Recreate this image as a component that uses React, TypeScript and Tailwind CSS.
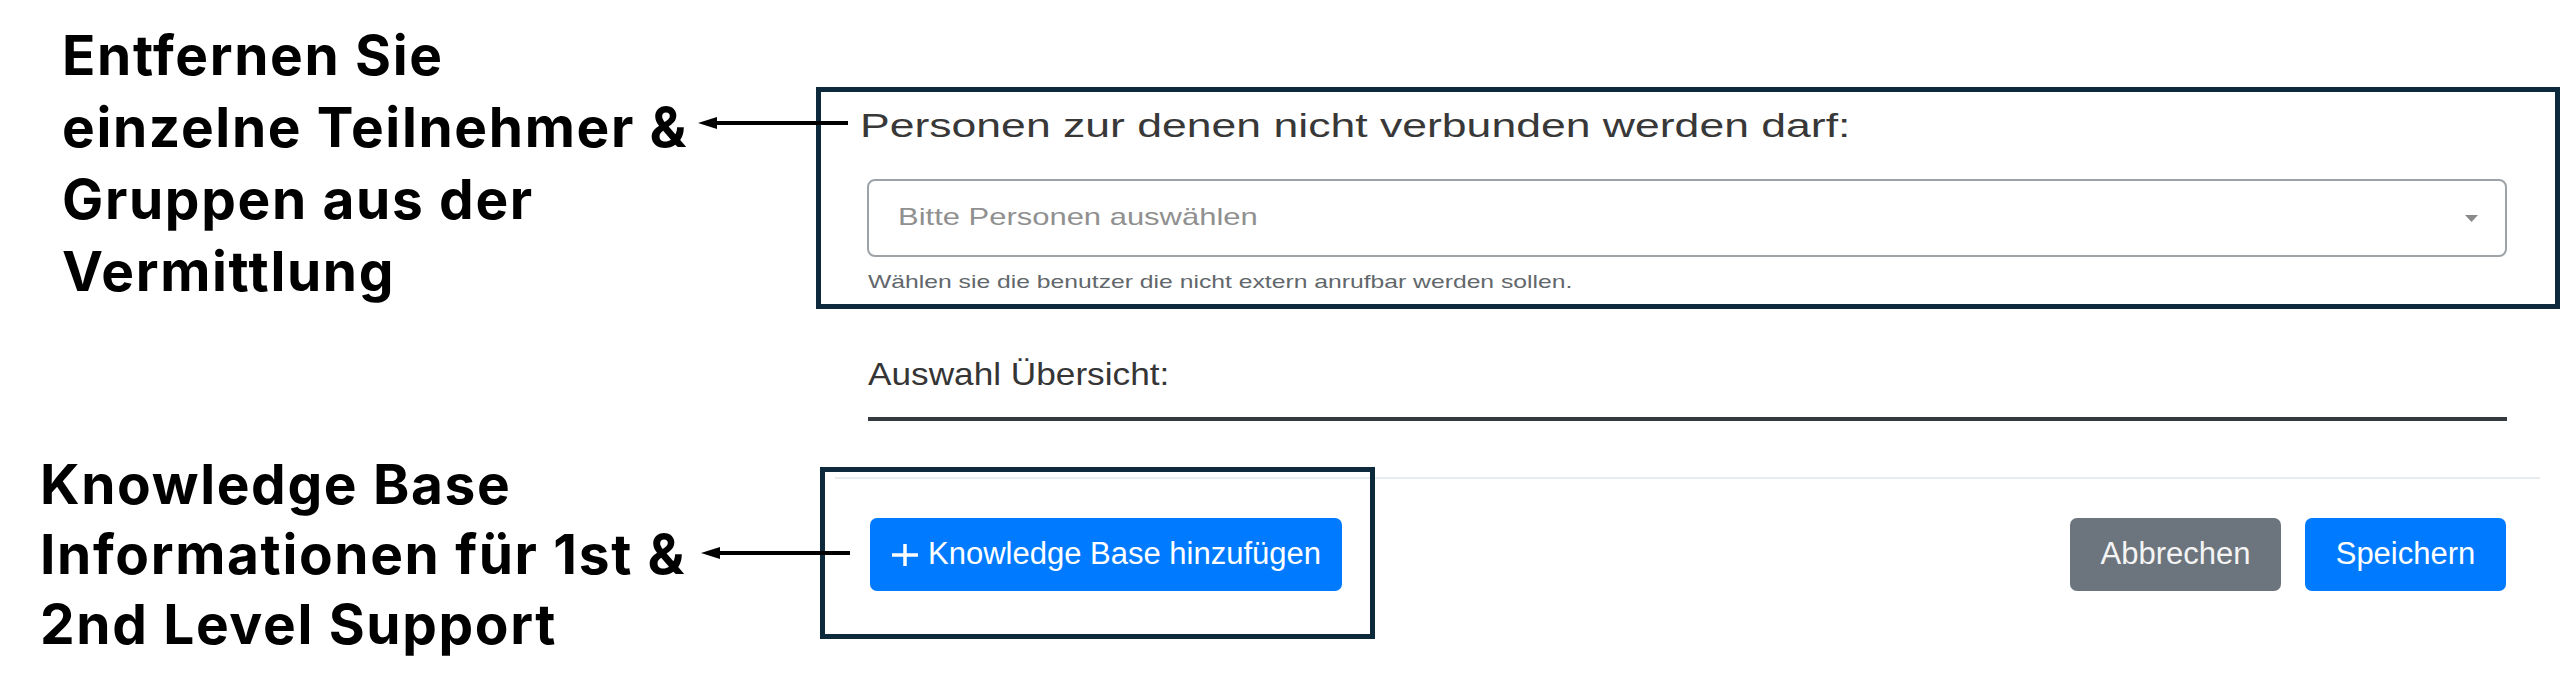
const ink = "border-[#0c2a3b]"

function Arrow({ className, length }: { className: string; length: number }) {
  return (
    <svg className={className} viewBox={`0 0 ${length} 14`} fill="black">
      <polygon points="0,7 19,1 19,13" />
      <rect x="15" y="5" width={length - 15} height="4" />
    </svg>
  )
}

function Plus() {
  return (
    <svg className="h-[22px] w-[28px]" viewBox="0 0 28 22" stroke="white" strokeWidth="3.5">
      <line x1="14" y1="0" x2="14" y2="22" />
      <line x1="1" y1="11" x2="27" y2="11" />
    </svg>
  )
}

export default function App() {
  return (
    <div className="relative h-[697px] w-[2560px] overflow-hidden bg-white font-['Liberation_Sans',Arial,sans-serif]">
      <div className="flex">
        {/* callouts */}
        <div className="flex w-[816px] shrink-0 flex-col font-['Inter',sans-serif] text-[55px] font-bold tracking-[0.03em] text-black">
          <div className="pl-[62px] pt-[19px] leading-[72px]">
            <p>Entfernen Sie</p>
            <p>einzelne Teilnehmer &amp;</p>
            <p>Gruppen aus der</p>
            <p>Vermittlung</p>
          </div>
          <div className="mt-[142px] pl-[40px] leading-[70px]">
            <p>Knowledge Base</p>
            <p>Informationen für 1st &amp;</p>
            <p>2nd Level Support</p>
          </div>
        </div>

        {/* form */}
        <div className="w-[1744px] shrink-0">
          <div className={`mt-[87px] h-[222px] border-[5px] ${ink} pl-[39px] pr-[48px] pt-[16px]`}>
            <div className="origin-left scale-x-[1.31] whitespace-nowrap text-[34px] leading-[34px] text-[#383838]">
              Personen zur denen nicht verbunden werden darf:
            </div>
            <div className="ml-[7px] mt-[37px] flex h-[78px] items-center justify-between rounded-[8px] border-2 border-[#9ea3a8] pl-[29px] pr-[27px]">
              <div className="-mt-[3px] origin-left scale-x-[1.29] whitespace-nowrap text-[24px] leading-[24px] text-[#909090]">
                Bitte Personen auswählen
              </div>
              <svg className="h-[7px] w-[13px]" viewBox="0 0 13 7" fill="#8a8a8a">
                <polygon points="0,0 13,0 6.5,7" />
              </svg>
            </div>
            <div className="ml-[8px] mt-[15px] origin-left scale-x-[1.3] whitespace-nowrap text-[19px] leading-[19px] text-[#62676b]">
              Wählen sie die benutzer die nicht extern anrufbar werden sollen.
            </div>
          </div>

          <div className="mt-[49px] pl-[52px]">
            <div className="origin-left scale-x-[1.1] whitespace-nowrap text-[32px] leading-[32px] text-[#353535]">
              Auswahl Übersicht:
            </div>
          </div>
          <div className="ml-[52px] mr-[53px] mt-[27px] h-[4px] bg-[#343a40]" />

          <div className="relative ml-[19px] mr-[20px] mt-[56px] flex justify-between border-t-2 border-[#e9ecef] pl-[35px] pr-[34px] pt-[39px]">
            <button className="flex h-[73px] w-[472px] items-center gap-[9px] rounded-[7px] bg-[#007bff] pl-[21px] text-[31px] text-white">
              <Plus />
              <span>Knowledge Base hinzufügen</span>
            </button>
            <div className="flex gap-[24px]">
              <button className="h-[73px] w-[211px] rounded-[7px] bg-[#6c757d] text-[31px] text-[#f4f4f4]">Abbrechen</button>
              <button className="h-[73px] w-[201px] rounded-[7px] bg-[#007bff] text-[31px] text-white">Speichern</button>
            </div>
            <div className={`pointer-events-none absolute -left-[15px] -top-[12px] h-[172px] w-[555px] border-[5px] ${ink}`} />
          </div>
        </div>
      </div>

      <Arrow className="absolute left-[698px] top-[116px] h-[14px] w-[150px]" length={150} />
      <Arrow className="absolute left-[701px] top-[546px] h-[14px] w-[149px]" length={149} />
    </div>
  )
}
